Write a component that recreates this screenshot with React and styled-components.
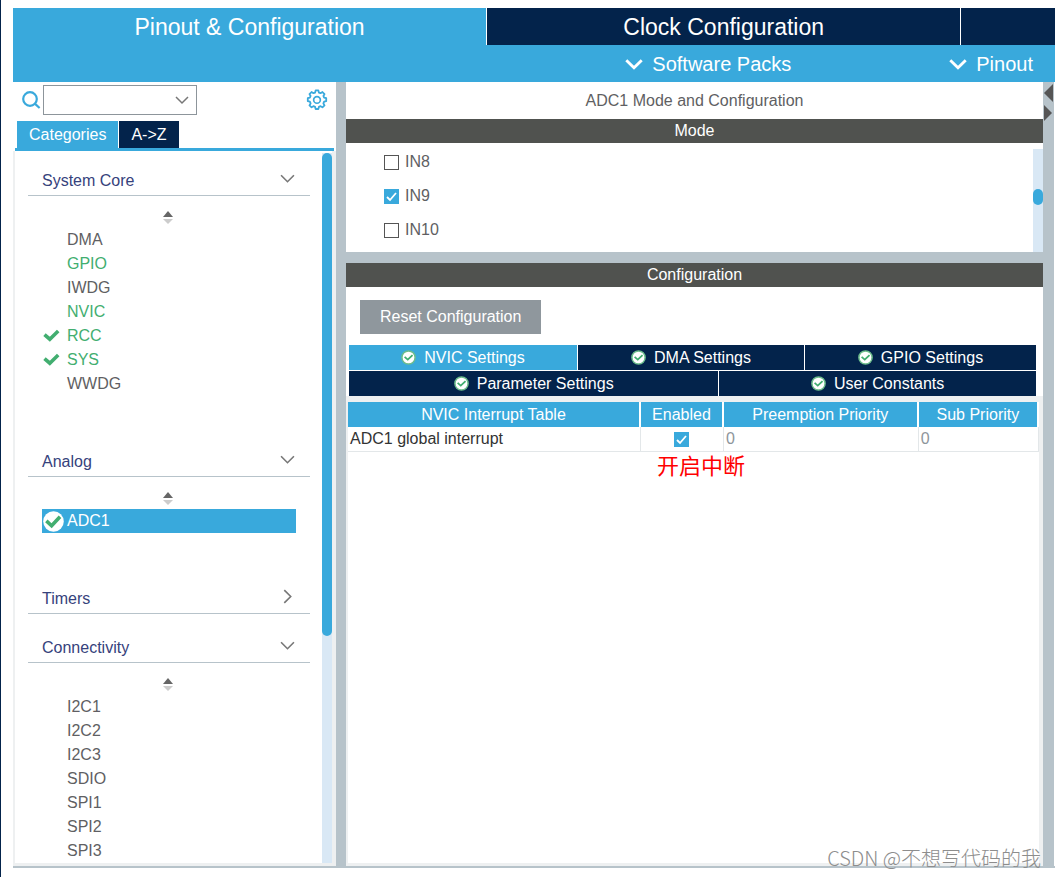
import React, { useState } from "react";
import styled, { createGlobalStyle } from "styled-components";

const coreItems = [
  { name: "DMA" },
  { name: "GPIO", used: true },
  { name: "IWDG" },
  { name: "NVIC", used: true },
  { name: "RCC", used: true, checked: true },
  { name: "SYS", used: true, checked: true },
  { name: "WWDG" },
];
const connectivityItems = [
  { name: "I2C1" },
  { name: "I2C2" },
  { name: "I2C3" },
  { name: "SDIO" },
  { name: "SPI1" },
  { name: "SPI2" },
  { name: "SPI3" },
];

function Chevron({ size = 14, thick = 1.5, right }) {
  return (
    <svg width={size} height={size} viewBox="0 0 14 14" fill="none" stroke="currentColor" strokeWidth={thick}>
      <path d={right ? "M4 1 L10 7 L4 13" : "M1 4 L7 10 L13 4"} />
    </svg>
  );
}

function SearchIcon() {
  return (
    <svg width="19" height="19" viewBox="0 0 19 19" fill="none" stroke="#39a9dc" strokeWidth="2.2">
      <circle cx="8" cy="8" r="6.8" />
      <path d="M12.8 12.6 L17.6 17" />
    </svg>
  );
}

function GearIcon() {
  return (
    <svg width="22" height="22" viewBox="0.5 -0.2 21 21" fill="none" stroke="#39a9dc">
      <path
        strokeWidth="1.7"
        strokeLinejoin="round"
        d="M9.7 1.2h2.6l.5 2 1.6.6 1.8-1.1 2 1.9-1.1 1.8.7 1.6 2 .6v2.8l-2 .5-.7 1.7 1.1 1.8-2 1.9-1.8-1.1-1.6.7-.5 2H9.7l-.5-2-1.6-.7-1.8 1.1-2-1.9 1.1-1.8-.7-1.7-2-.5V8.6l2-.6.7-1.6-1.1-1.8 2-1.9 1.8 1.1 1.6-.6z"
      />
      <circle cx="11" cy="10.2" r="3.2" strokeWidth="1.6" />
    </svg>
  );
}

function Tick() {
  return (
    <svg width="17" height="14" viewBox="0 0 17 14" fill="none" stroke="#42ae70" strokeWidth="3.6">
      <path d="M1.5 5.6 L6.8 10.2 L15.2 2" />
    </svg>
  );
}

function TickCircle({ size, large }) {
  return (
    <svg width={size} height={size} viewBox="0 0 20 20" fill="none">
      <circle cx="10" cy="10" r={large ? 9.8 : 8.8} fill="#fff" stroke={large ? "none" : "#6dbd8c"} strokeWidth="2" />
      <path
        d={large ? "M3.2 9.4 L8.2 14 L16.2 5.4" : "M4.8 9.2 L9 12.8 L15.4 6.8"}
        stroke="#42ae70"
        strokeWidth={large ? 3.4 : 2.4}
      />
    </svg>
  );
}

function Sorter() {
  return (
    <SorterButton aria-label="Sort">
      <svg width="12" height="14" viewBox="0 0 12 14">
        <path d="M5 0 L10 6 H0 Z" fill="#666" />
        <path d="M0 8 H10 L5 13 Z" fill="#ccc" />
      </svg>
    </SorterButton>
  );
}

function Category({ title, items, closed }) {
  const [open, setOpen] = useState(!closed);
  return (
    <section>
      <CategoryHeader onClick={() => setOpen(!open)}>
        {title}
        <Chevron right={!open} size={15} />
      </CategoryHeader>
      {open && (
        <>
          <Sorter />
          <ItemList>
            {items.map((item) => (
              <Item key={item.name} $used={item.used} $selected={item.selected}>
                <ItemIcon>
                  {item.selected && <TickCircle size={21} large />}
                  {item.checked && <Tick />}
                </ItemIcon>
                {item.name}
              </Item>
            ))}
          </ItemList>
        </>
      )}
    </section>
  );
}

function Sidebar() {
  return (
    <SidebarPane>
      <SearchRow>
        <SearchIcon />
        <Combo>
          <select aria-label="Search">
            <option></option>
          </select>
          <Chevron />
        </Combo>
        <IconButton aria-label="Settings">
          <GearIcon />
        </IconButton>
      </SearchRow>
      <SideTabs>
        <SideTab $active>Categories</SideTab>
        <SideTab>A-&gt;Z</SideTab>
      </SideTabs>
      <SideBody>
        <Tree>
          <Category title="System Core" items={coreItems} />
          <Category title="Analog" items={[{ name: "ADC1", selected: true }]} />
          <Category title="Timers" items={[]} closed />
          <Category title="Connectivity" items={connectivityItems} />
        </Tree>
        <SideTrack>
          <Thumb $start={0} $size={68} />
        </SideTrack>
      </SideBody>
    </SidebarPane>
  );
}

function ModePane() {
  return (
    <Pane>
      <PaneTitle>ADC1 Mode and Configuration</PaneTitle>
      <Bar>Mode</Bar>
      <ModeBody>
        <Channels>
          {["IN8", "IN9", "IN10"].map((name) => (
            <Channel key={name}>
              <Check type="checkbox" defaultChecked={name === "IN9"} />
              {name}
            </Channel>
          ))}
        </Channels>
        <ModeTrack>
          <Thumb $start={39} $size={15} />
        </ModeTrack>
      </ModeBody>
    </Pane>
  );
}

function ConfigPane() {
  return (
    <Pane $grow>
      <Bar>Configuration</Bar>
      <ResetButton>Reset Configuration</ResetButton>
      <ConfigTabs>
        <TabRow>
          <ConfigTab $active>
            <TickCircle size={15} />
            NVIC Settings
          </ConfigTab>
          <ConfigTab>
            <TickCircle size={15} />
            DMA Settings
          </ConfigTab>
          <ConfigTab>
            <TickCircle size={15} />
            GPIO Settings
          </ConfigTab>
        </TabRow>
        <TabRow $wide>
          <ConfigTab>
            <TickCircle size={15} />
            Parameter Settings
          </ConfigTab>
          <ConfigTab>
            <TickCircle size={15} />
            User Constants
          </ConfigTab>
        </TabRow>
      </ConfigTabs>
      <TableArea>
        <Table>
          <colgroup>
            <col style={{ width: "42.4%" }} />
            <col style={{ width: "12%" }} />
            <col style={{ width: "28.2%" }} />
            <col />
          </colgroup>
          <thead>
            <tr>
              <th>NVIC Interrupt Table</th>
              <th>Enabled</th>
              <th>Preemption Priority</th>
              <th>Sub Priority</th>
            </tr>
          </thead>
          <tbody>
            <tr>
              <td>ADC1 global interrupt</td>
              <CheckCell>
                <Check type="checkbox" defaultChecked aria-label="Enable ADC1 global interrupt" />
              </CheckCell>
              <MutedCell>0</MutedCell>
              <MutedCell>0</MutedCell>
            </tr>
          </tbody>
        </Table>
        <Note>开启中断</Note>
      </TableArea>
    </Pane>
  );
}

export default function App() {
  return (
    <Page>
      <GlobalStyle />
      <MainTabs>
        <MainTab $active>Pinout &amp; Configuration</MainTab>
        <MainTab>Clock Configuration</MainTab>
        <MainTab $short aria-label="Project Manager" />
      </MainTabs>
      <SubBar>
        <SubButton>
          <Chevron size={18} thick={2.2} />
          Software Packs
        </SubButton>
        <SubButton>
          <Chevron size={18} thick={2.2} />
          Pinout
        </SubButton>
      </SubBar>
      <Workspace>
        <Sidebar />
        <Panes>
          <ModePane />
          <ConfigPane />
        </Panes>
        <Divider>
          <svg width="9" height="40" viewBox="0 0 9 40" fill="#555">
            <path d="M9 1 V19 L0 10 Z" />
            <path d="M0 22 V38 L8 30 Z" />
          </svg>
        </Divider>
      </Workspace>
      <Watermark>CSDN @不想写代码的我</Watermark>
    </Page>
  );
}

const GlobalStyle = createGlobalStyle`
  * {
    box-sizing: border-box;
  }
  body {
    margin: 0;
    background: #fff;
    color: #5f5f63;
    font-family: "Liberation Sans", "Noto Sans CJK SC", sans-serif;
    font-size: 16px;
    line-height: 20px;
  }
  button, select {
    border: 0;
    padding: 0;
    background: none;
    color: inherit;
    font: inherit;
    cursor: pointer;
  }
  svg {
    display: block;
    flex-shrink: 0;
  }
`;

const Page = styled.div`
  position: relative;
  display: flex;
  flex-direction: column;
  min-height: 100vh;
  padding: 8px 0 9px 12px;
  border-left: 1px solid #03234b;
`;

const MainTabs = styled.nav`
  display: flex;
  gap: 1px;
  height: 37px;
  background: linear-gradient(to right, #39a9dc 40%, #fff 40%);
`;

const MainTab = styled.button`
  flex: ${({ $short }) => ($short ? "0 0 9%" : "1 1 0")};
  background: ${({ $active }) => ($active ? "#39a9dc" : "#03234b")};
  color: #fff;
  font-size: 23px;
  line-height: 28px;
`;

const SubBar = styled.div`
  display: flex;
  justify-content: flex-end;
  gap: 158px;
  height: 37px;
  padding-right: 22px;
  background: #39a9dc;
`;

const SubButton = styled.button`
  display: flex;
  align-items: center;
  gap: 9px;
  color: #fff;
  font-size: 20px;
`;

const Workspace = styled.main`
  flex: 1;
  display: flex;
  border-bottom: 2px solid #b7c3ca;
`;

const SidebarPane = styled.aside`
  display: flex;
  flex-direction: column;
  flex: 0 0 323px;
`;

const SearchRow = styled.div`
  display: flex;
  align-items: center;
  gap: 2px;
  padding: 3px 8px 0 9px;
`;

const Combo = styled.div`
  position: relative;
  width: 154px;
  select {
    display: block;
    width: 100%;
    height: 30px;
    border: 1px solid #8d959b;
    background: #fff;
    appearance: none;
  }
  svg {
    position: absolute;
    top: 8px;
    right: 8px;
    color: #777;
    pointer-events: none;
  }
`;

const IconButton = styled.button`
  margin-left: auto;
`;

const SideTabs = styled.div`
  display: flex;
  gap: 1px;
  margin: 6px 2px 0;
  padding-left: 2px;
  border-bottom: 3px solid #39a9dc;
`;

const SideTab = styled.button`
  height: 27px;
  padding: 0 12px;
  background: ${({ $active }) => ($active ? "#39a9dc" : "#03234b")};
  color: #fff;
`;

const SideBody = styled.div`
  flex: 1;
  display: flex;
  border: solid #eef0f1;
  border-width: 0 4px 3px 2px;
`;

const Tree = styled.div`
  flex: 1;
  display: flex;
  flex-direction: column;
  gap: 4px;
  padding: 0 12px 0 13px;
`;

const Track = styled.div`
  width: 10px;
  background: #d9e8f5;
`;

const SideTrack = styled(Track)`
  margin-top: 2px;
`;

const Thumb = styled.div`
  position: relative;
  top: ${({ $start }) => $start}%;
  height: ${({ $size }) => $size}%;
  border-radius: 5px;
  background: #39a9dc;
`;

const CategoryHeader = styled.button`
  display: flex;
  align-items: flex-start;
  justify-content: space-between;
  width: 100%;
  padding: 20px 15px 4px 14px;
  border-bottom: 1px solid #b7c3ca;
  color: #36427c;
  svg {
    color: #777;
  }
`;

const SorterButton = styled.button`
  display: flex;
  justify-content: center;
  align-items: center;
  width: 100%;
  height: 32px;
  padding-top: 12px;
`;

const ItemList = styled.ul`
  margin: 0;
  padding: 0 14px 32px;
  list-style: none;
  section:last-child > & {
    padding-bottom: 0;
  }
`;

const Item = styled.li`
  display: flex;
  align-items: center;
  height: 24px;
  background: ${({ $selected }) => ($selected ? "#39a9dc" : "none")};
  color: ${({ $used, $selected }) => ($selected ? "#fff" : $used ? "#42ae70" : "inherit")};
`;

const ItemIcon = styled.span`
  width: 25px;
  padding-left: 1px;
`;

const Panes = styled.div`
  flex: 1;
  display: flex;
  flex-direction: column;
  gap: 11px;
  border-left: 10px solid #b7c3ca;
  background: #b7c3ca;
`;

const Pane = styled.section`
  display: flex;
  flex-direction: column;
  flex: ${({ $grow }) => ($grow ? "1" : "none")};
  background: #fff;
`;

const PaneTitle = styled.div`
  padding: 9px 0 8px;
  text-align: center;
`;

const Bar = styled.div`
  height: 24px;
  line-height: 24px;
  background: #50524f;
  color: #fff;
  text-align: center;
`;

const ModeBody = styled.div`
  display: flex;
  height: 109px;
  padding-top: 6px;
`;

const Channels = styled.div`
  flex: 1;
  display: flex;
  flex-direction: column;
  gap: 14px;
  padding: 3px 38px;
`;

const Channel = styled.label`
  display: flex;
  align-items: center;
  gap: 6px;
`;

const ModeTrack = styled(Track)`
  height: 103px;
`;

const Check = styled.input`
  appearance: none;
  width: 15px;
  height: 15px;
  margin: 0;
  border: 1px solid #555;
  background: #fff;
  &:checked {
    border-color: #39a9dc;
    background: #39a9dc
      url("data:image/svg+xml,%3Csvg xmlns='http://www.w3.org/2000/svg' viewBox='0 0 13 13' fill='none' stroke='white' stroke-width='1.8'%3E%3Cpath d='M2 7 L5 10 L11 3'/%3E%3C/svg%3E");
  }
`;

const ResetButton = styled.button`
  align-self: flex-start;
  margin: 13px 14px 11px;
  padding: 7px 20px;
  background: #8f979d;
  color: #fff;
`;

const ConfigTabs = styled.div`
  display: flex;
  flex-direction: column;
  gap: 1px;
  padding: 0 7px 0 3px;
`;

const TabRow = styled.div`
  display: grid;
  grid-template-columns: ${({ $wide }) => ($wide ? "7fr 6fr" : "228fr 226fr 231fr")};
  gap: 1px;
`;

const ConfigTab = styled.button`
  display: flex;
  align-items: center;
  justify-content: center;
  gap: 8px;
  height: 25px;
  background: ${({ $active }) => ($active ? "#39a9dc" : "#03234b")};
  color: #fff;
`;

const TableArea = styled.div`
  flex: 1;
  border: solid #eef0f1;
  border-width: 6px 4px 3px 2px;
`;

const Table = styled.table`
  width: 100%;
  border-collapse: separate;
  border-spacing: 0;
  table-layout: fixed;
  th, td {
    height: 25px;
    padding: 0 2px;
    line-height: 24px;
    white-space: nowrap;
  }
  th {
    border-right: 2px solid #fff;
    background: #39a9dc;
    color: #fff;
    font-weight: normal;
  }
  td {
    border: solid #e3e7e9;
    border-width: 0 1px 1px 0;
    color: #333;
  }
`;

const CheckCell = styled.td`
  text-align: center;
  ${Check} {
    display: block;
    margin: 0 auto;
  }
`;

const MutedCell = styled.td`
  && {
    color: #8e959b;
  }
`;

const Note = styled.div`
  padding-left: 309px;
  color: #f00;
  font-family: "Noto Sans CJK SC", serif;
  font-size: 22px;
  line-height: 24px;
`;

const Divider = styled.div`
  flex: 0 0 11px;
  margin-right: 1px;
  padding: 1px;
  background: #b7c3ca;
`;

const Watermark = styled.div`
  position: absolute;
  right: 14px;
  bottom: 7px;
  color: #8d8d8d;
  font-family: "Noto Sans CJK SC", sans-serif;
  font-size: 20px;
  font-weight: 300;
  line-height: 24px;
`;
